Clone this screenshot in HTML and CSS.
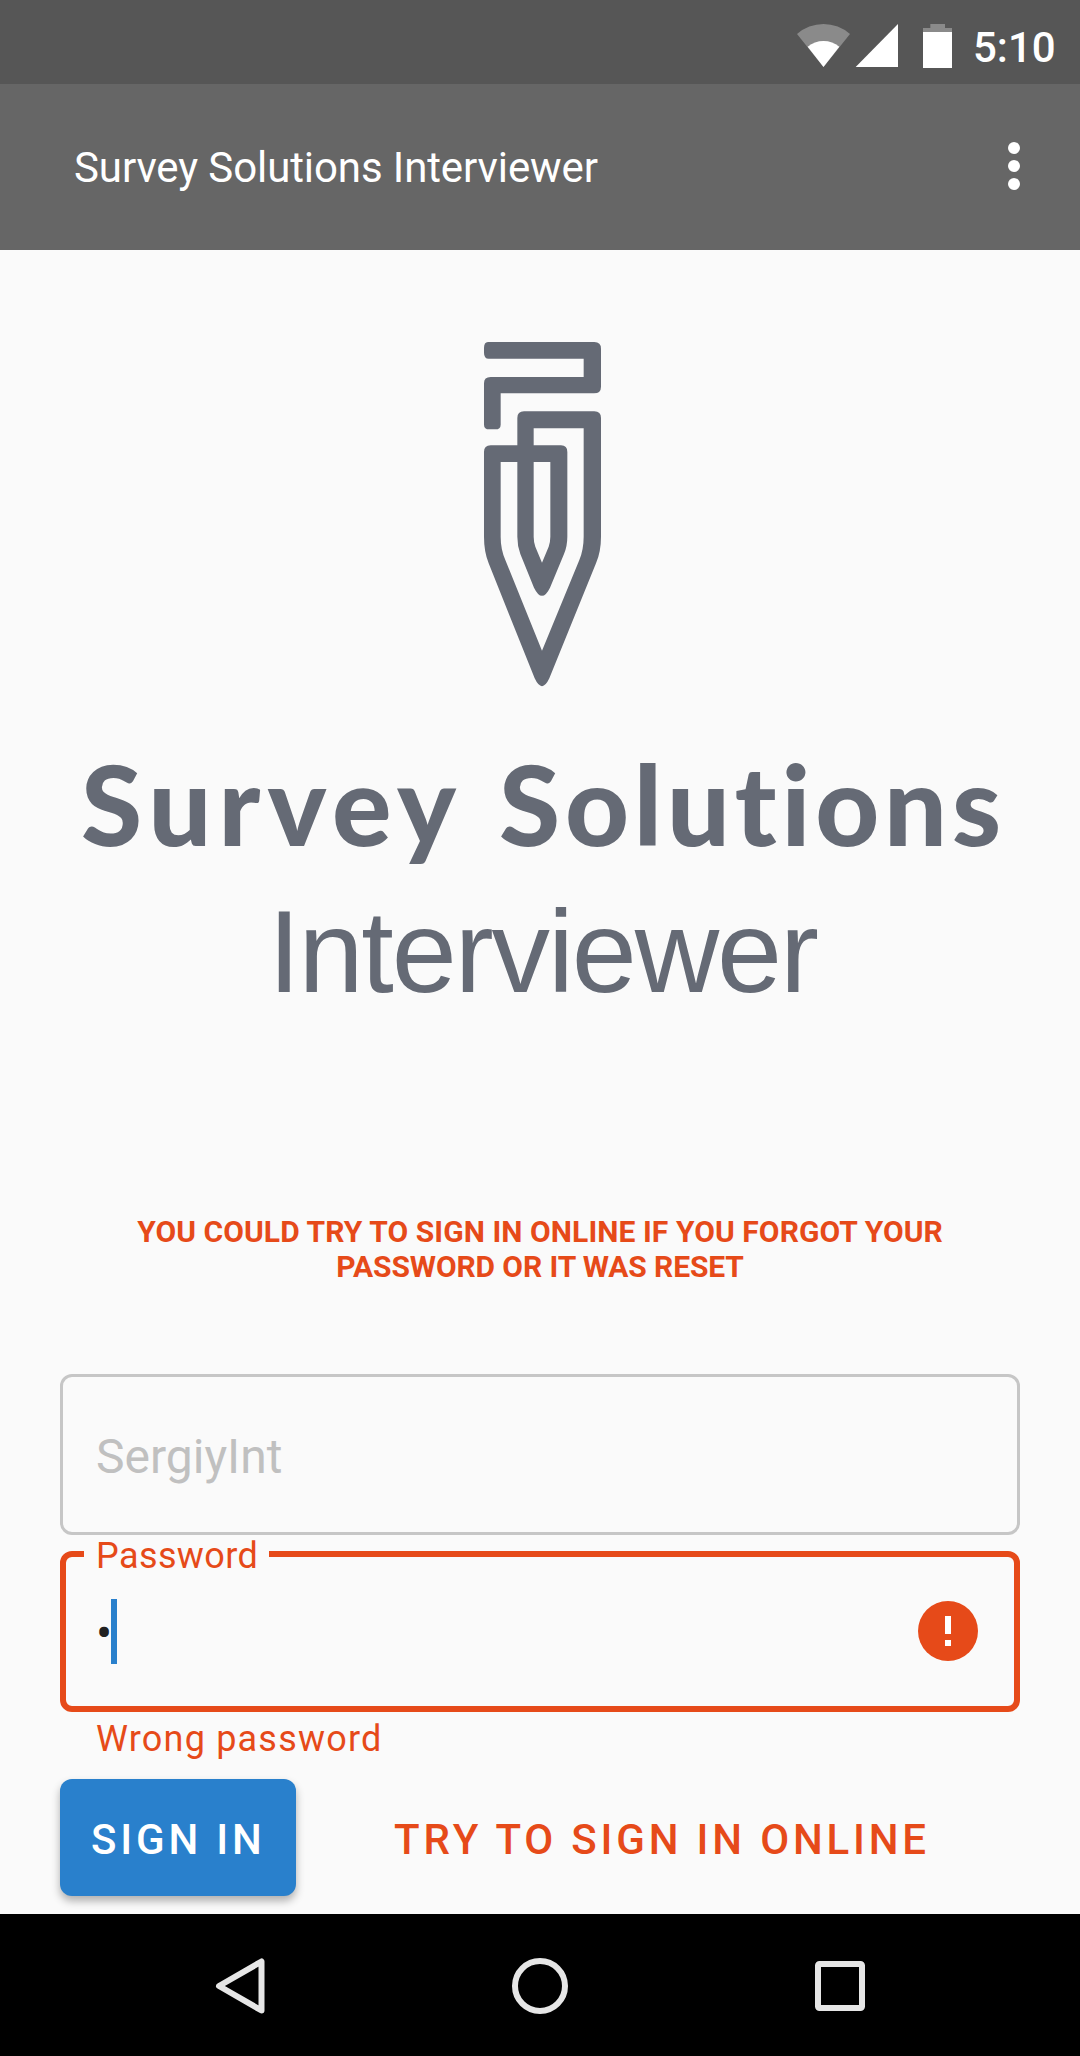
FILE: index.html
```html
<!DOCTYPE html>
<html lang="en">
<head>
<meta charset="utf-8">
<title>Survey Solutions Interviewer</title>
<link rel="stylesheet" href="styles.css">
</head>
<body>
<div class="screen">
  <div class="status-bar">
    <svg class="status-icons" viewBox="45 66 480 144" aria-hidden="true">
      <path fill="#8a8a8a" d="M51 102A120 120 0 0 1 210 102L130.500 201Z"/>
      <path fill="#fff" d="M83 140A75 75 0 0 1 178 140L130.500 201Z"/>
      <path fill="#fff" d="M354 72V201H227Z"/>
      <path fill="#8a8a8a" d="M451 72H495V84H516V97H429V84H451Z"/>
      <path fill="#fff" d="M429 96H516V204H429Z"/>
    </svg>
    <span class="clock">5:10</span>
  </div>
  <header class="app-bar">
    <h1 class="app-title">Survey Solutions Interviewer</h1>
    <svg class="menu-icon" viewBox="0 0 12 48" aria-hidden="true">
      <circle cx="6" cy="6" r="6"/><circle cx="6" cy="24" r="6"/><circle cx="6" cy="42" r="6"/>
    </svg>
  </header>
  <main class="content">
    <svg class="logo" viewBox="60 320 960 720" role="img" aria-label="Survey Solutions Interviewer">
      <g fill="#656a75">
        <g transform="translate(460 320) scale(.33333)">
          <path d="M84 66H403Q423 66 423 86V200Q423 220 402 220H122V314Q122 328 106 328H88Q72 328 72 314V190Q72 171 92 171H371V116H86Q72 116 72 98V84Q72 66 84 66Z"/>
          <path fill-rule="evenodd" d="M92 376H172V294Q172 274 192 274H403Q423 274 423 294V650Q423 695 408 730L268 1075Q246 1122 224 1075L86 730Q72 695 72 650V396Q72 376 92 376ZM122 426V650Q122 688 136 720L246 992L358 720Q371 688 371 650V325H221V376H303Q322 376 322 396V650Q322 678 312 702L270 803Q246 852 222 803L181 702Q172 678 172 650V426ZM221 426H271V650Q271 665 266 680L246 728L226 680Q221 665 221 650Z"/>
        </g>
        <text class="logo-name" x="81" y="846" textLength="375">Survey</text>
        <text class="logo-name" x="499" y="846" textLength="502">Solutions</text>
        <text class="logo-product" x="268" y="992" textLength="551">Interviewer</text>
      </g>
    </svg>
    <p class="message"><span class="message-first">YOU COULD TRY TO SIGN IN ONLINE IF YOU FORGOT YOUR</span><br><span class="message-second">PASSWORD OR IT WAS RESET</span></p>
    <div class="field field-login">SergiyInt</div>
    <div class="field field-password">
      <span class="field-label">Password</span>
      <span class="bullet">•</span>
      <span class="caret"></span>
      <svg class="error-icon" viewBox="0 0 60 60" aria-hidden="true">
        <circle cx="30" cy="30" r="30" fill="#e64a19"/>
        <path fill="#fff" d="M27 15h6v18h-6zM27 39h6v6h-6z"/>
      </svg>
    </div>
    <p class="error-text">Wrong password</p>
    <div class="actions">
      <button class="btn btn-primary">SIGN IN</button>
      <button class="btn btn-text">TRY TO SIGN IN ONLINE</button>
    </div>
  </main>
  <nav class="nav-bar">
    <svg viewBox="0 0 60 60" aria-hidden="true"><path d="M51.500 5.500V54.500L9 30Z"/></svg>
    <svg viewBox="0 0 60 60" aria-hidden="true"><circle cx="30" cy="30" r="25"/></svg>
    <svg viewBox="0 0 60 60" aria-hidden="true"><rect x="8" y="8" width="44" height="44" rx="1.500"/></svg>
  </nav>
</div>
</body>
</html>
```
FILE: styles.css
```css
* { box-sizing: border-box; }
body {
  margin: 0;
  background: #fafafa;
  font-family: Roboto, "Liberation Sans", sans-serif;
}
.screen {
  display: flex;
  flex-direction: column;
  width: 1080px;
  height: 2056px;
}
.status-bar {
  display: flex;
  height: 84px;
  padding: 22px 0 0 795px;
  background: #565656;
}
.status-icons { width: 160px; height: 48px; flex: none; }
.clock {
  margin: 1px 0 0 18px;
  font-size: 42px;
  font-weight: 500;
  line-height: 50px;
  color: #fff;
}
.app-bar {
  display: flex;
  align-items: center;
  justify-content: space-between;
  height: 166px;
  padding: 0 60px 0 74px;
  background: #666;
}
.app-title {
  margin: 2px 0 0;
  font-size: 42px;
  font-weight: 400;
  line-height: 50px;
  letter-spacing: -.1px;
  color: #fff;
}
.menu-icon { width: 12px; height: 48px; fill: #fff; margin-top: -2px; }
.content {
  display: flex;
  flex-direction: column;
  height: 1664px;
  padding: 70px 60px 0;
}
.logo { width: 960px; height: 720px; flex: none; }
.logo-name {
  font: 900 111px Lato, sans-serif;
  font-variant-ligatures: none;
}
.logo-product { font: 400 117px "Liberation Sans", Arial, sans-serif; }
.message {
  margin: 174px 0 90px;
  font-size: 30px;
  font-weight: 700;
  line-height: 35px;
  text-align: center;
  color: #e64a19;
}
.message-first { letter-spacing: .08px; }
.message-second { letter-spacing: -.1px; }
.field {
  position: relative;
  display: flex;
  align-items: center;
  flex: none;
  height: 161px;
  border-radius: 12px;
  font-size: 48px;
  line-height: 56px;
}
.field-login {
  padding: 4px 33px 0;
  border: 3px solid #c6c6c6;
  color: #c0c0c0;
}
.field-password {
  margin-top: 16px;
  padding: 0 36px 0 30px;
  border: 6px solid #e64a19;
  color: #212121;
}
.field-label {
  position: absolute;
  left: 18px;
  top: -22px;
  width: 185px;
  padding-left: 12px;
  background: #fafafa;
  font-size: 36px;
  line-height: 42px;
  letter-spacing: .4px;
  color: #e64a19;
}
.bullet { width: 15px; padding-top: 5px; }
.caret { width: 6px; height: 65px; background: #2980cc; }
.error-icon { width: 60px; height: 60px; margin: -1px 0 0 auto; }
.error-text {
  margin: 6px 0 0 36px;
  font-size: 36px;
  line-height: 42px;
  letter-spacing: 1.2px;
  color: #e64a19;
}
.actions {
  display: flex;
  margin-top: 19px;
}
.btn {
  height: 117px;
  padding: 3px 0 0;
  border: 0;
  border-radius: 12px;
  font: 500 42px Roboto, sans-serif;
  letter-spacing: 3.82px;
  text-align: left;
  white-space: nowrap;
}
.btn-primary {
  width: 236px;
  padding-left: 31px;
  background: #2980cc;
  color: #fff;
  box-shadow: 0 5px 8px rgba(0, 0, 0, .3);
}
.btn-text {
  margin-left: 98px;
  background: none;
  color: #e64a19;
}
.nav-bar {
  display: flex;
  align-items: center;
  justify-content: space-between;
  height: 142px;
  padding: 2px 210px 0;
  background: #000;
}
.nav-bar svg {
  width: 60px;
  height: 60px;
  fill: none;
  stroke: #e6e6e6;
  stroke-width: 6;
  stroke-linejoin: round;
}
```
